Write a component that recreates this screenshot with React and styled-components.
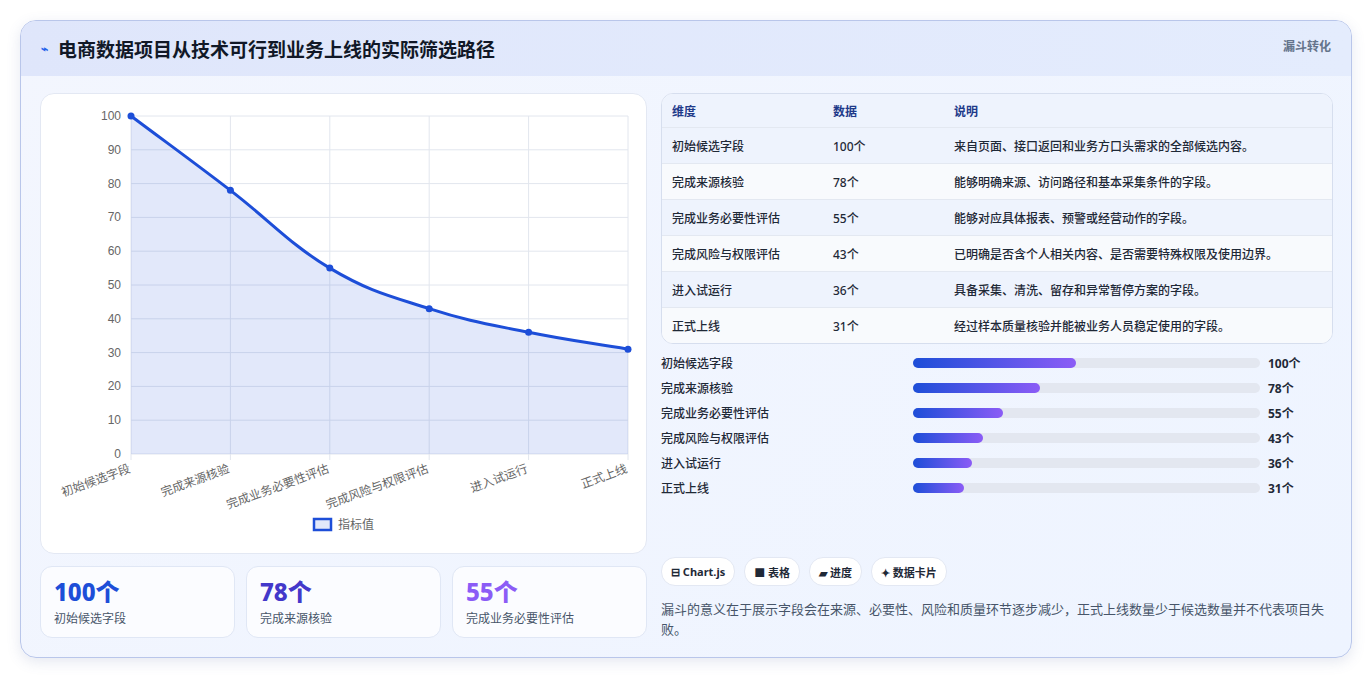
import React from 'react';
import styled, { createGlobalStyle } from 'styled-components';

const Global = createGlobalStyle`
  body { margin:0; background:#fff; font-family:"Noto Sans","Noto Sans CJK SC",sans-serif; }
`;

const Page = styled.div`
  padding:20px;
  height:678px;
  box-sizing:border-box;
`;

const Card = styled.div`
  height:638px;
  box-sizing:border-box;
  border:1px solid #b9c6ea;
  border-radius:16px;
  background:linear-gradient(135deg,#f3f6fe,#eef4ff);
  box-shadow:0 4px 14px rgba(80,100,160,0.15);
  overflow:hidden;
  display:flex;
  flex-direction:column;
`;

const Header = styled.div`
  height:55px;
  flex:none;
  display:flex;
  align-items:center;
  justify-content:space-between;
  padding:0 20px 0 20px;
  background:linear-gradient(90deg,#dfe6fb,#e4ecfd);
`;

const Title = styled.h1`
  margin:0;
  font-size:19px;
  font-weight:700;
  color:#111827;
  display:flex;
  align-items:center;
  gap:10px;
`;

const Tag = styled.span`
  font-size:12px;
  font-weight:700;
  color:#64748b;
  align-self:flex-start;
  margin-top:16px;
`;

const Body = styled.div`
  flex:1;
  display:grid;
  grid-template-columns:607px 672px;
  gap:14px;
  padding:17px 19px 18px 19px;
`;

const Col = styled.div`
  display:flex;
  flex-direction:column;
`;

const ChartPanel = styled.div`
  height:461px;
  background:#fff;
  border:1px solid #e3e8f3;
  border-radius:14px;
  box-sizing:border-box;
`;

const Kpis = styled.div`
  display:grid;
  grid-template-columns:repeat(3,1fr);
  gap:11px;
  margin-top:12px;
`;

const Kpi = styled.div`
  height:72px;
  box-sizing:border-box;
  background:#fbfcff;
  border:1px solid #e0e7f5;
  border-radius:12px;
  padding:10px 13px;
`;

const KpiValue = styled.div`
  font-size:24px;
  font-weight:800;
  line-height:30px;
  color:${p => p.color};
`;

const KpiLabel = styled.div`
  font-size:12px;
  color:#475569;
  margin-top:2px;
`;

const Table = styled.div`
  background:#fff;
  border:1px solid #d6deee;
  border-radius:12px;
  overflow:hidden;
`;

const Row = styled.div`
  display:grid;
  grid-template-columns:161px 121px 1fr;
  height:${p => (p.head ? 33 : 35)}px;
  align-items:center;
  padding-left:10px;
  font-size:12px;
  color:#1f2937;
  font-weight:${p => (p.head ? 700 : 500)};
  background:${p => (p.head ? '#eef3fd' : p.alt ? '#f8fafd' : '#eef3fd')};
  border-top:${p => (p.head ? 'none' : '1px solid #e3e8f1')};
  ${p => p.head && 'color:#1e3a8a;'}
`;

const Bars = styled.div`
  display:flex;
  flex-direction:column;
  gap:7px;
  margin-top:10px;
`;

const BarRow = styled.div`
  display:grid;
  grid-template-columns:252px 347px 1fr;
  gap:0 0;
  align-items:center;
  height:18px;
  font-size:12px;
  font-weight:500;
  color:#1f2937;
`;

const Track = styled.div`
  height:10px;
  border-radius:5px;
  background:#e3e7f0;
`;

const Fill = styled.div`
  height:100%;
  border-radius:5px;
  background:linear-gradient(90deg,#1d4ed8,#8b5cf6);
`;

const BarVal = styled.span`
  font-weight:700;
  padding-left:8px;
`;

const Chips = styled.div`
  display:flex;
  gap:9px;
  margin-top:auto;
`;

const Chip = styled.span`
  height:27px;
  padding:0 9px;
  display:flex;
  align-items:center;
  gap:4px;
  background:#fff;
  border:1px solid #e3e8f3;
  border-radius:14px;
  font-size:11px;
  font-weight:700;
  color:#1f2937;
`;

const Note = styled.p`
  margin:13px 0 0;
  font-size:13px;
  line-height:20px;
  color:#475569;
`;

const data = [
  ['初始候选字段', 100, '来自页面、接口返回和业务方口头需求的全部候选内容。'],
  ['完成来源核验', 78, '能够明确来源、访问路径和基本采集条件的字段。'],
  ['完成业务必要性评估', 55, '能够对应具体报表、预警或经营动作的字段。'],
  ['完成风险与权限评估', 43, '已明确是否含个人相关内容、是否需要特殊权限及使用边界。'],
  ['进入试运行', 36, '具备采集、清洗、留存和异常暂停方案的字段。'],
  ['正式上线', 31, '经过样本质量核验并能被业务人员稳定使用的字段。'],
];

const Chart = () => {
  const x0 = 90, x1 = 587, y0 = 22, y1 = 360;
  const xs = data.map((_, i) => x0 + (i * (x1 - x0)) / 5);
  const ys = data.map(d => y1 - (d[1] / 100) * (y1 - y0));
  let path = `M${xs[0]},${ys[0]}`;
  for (let i = 1; i < 6; i++) {
    const cx = (xs[i] - xs[i - 1]) * 0.4;
    const s0 = i > 1 ? (ys[i] - ys[i - 2]) / 2 : ys[1] - ys[0];
    const s1 = i < 5 ? (ys[i + 1] - ys[i - 1]) / 2 : ys[5] - ys[4];
    path += ` C${xs[i - 1] + cx},${ys[i - 1] + s0 * 0.4} ${xs[i] - cx},${ys[i] - s1 * 0.4} ${xs[i]},${ys[i]}`;
  }
  const ticks = [0, 10, 20, 30, 40, 50, 60, 70, 80, 90, 100];
  return (
    <svg width="605" height="459" style={{ display: 'block' }}>
      {ticks.map(t => {
        const y = y1 - (t / 100) * (y1 - y0);
        return (
          <g key={t}>
            <line x1={x0} x2={x1} y1={y} y2={y} stroke="#e2e6ee" />
            <text x={x0 - 10} y={y + 4} textAnchor="end" fontSize="12" fill="#666" fontFamily="Liberation Sans">{t}</text>
          </g>
        );
      })}
      {xs.map((x, i) => (
        <g key={i}>
          <line x1={x} x2={x} y1={y0} y2={y1 + 6} stroke="#e2e6ee" />
          <text transform={`translate(${x},${y1 + 18}) rotate(-20)`} textAnchor="end" fontSize="12" fill="#666" fontFamily="Noto Sans CJK SC">{data[i][0]}</text>
        </g>
      ))}
      <path d={`${path} L${x1},${y1} L${x0},${y1} Z`} fill="rgba(29,78,216,0.13)" />
      <path d={path} fill="none" stroke="#1d4ed8" strokeWidth="3" />
      {xs.map((x, i) => <circle key={i} cx={x} cy={ys[i]} r="3.5" fill="#1d4ed8" />)}
      <rect x="273" y="425" width="17" height="11" fill="rgba(29,78,216,0.13)" stroke="#1d4ed8" strokeWidth="2.5" />
      <text x="297" y="435" fontSize="12" fill="#666" fontFamily="Noto Sans CJK SC">指标值</text>
    </svg>
  );
};

export default function App() {
  return (
    <Page>
      <Global />
      <Card>
        <Header>
          <Title><span style={{ color: '#2563eb', fontSize: 12 }}>⌁</span>电商数据项目从技术可行到业务上线的实际筛选路径</Title>
          <Tag>漏斗转化</Tag>
        </Header>
        <Body>
          <Col>
            <ChartPanel><Chart /></ChartPanel>
            <Kpis>
              <Kpi><KpiValue color="#1d4ed8">100个</KpiValue><KpiLabel>初始候选字段</KpiLabel></Kpi>
              <Kpi><KpiValue color="#4338ca">78个</KpiValue><KpiLabel>完成来源核验</KpiLabel></Kpi>
              <Kpi><KpiValue color="#8b5cf6">55个</KpiValue><KpiLabel>完成业务必要性评估</KpiLabel></Kpi>
            </Kpis>
          </Col>
          <Col>
            <Table>
              <Row head><span>维度</span><span>数据</span><span>说明</span></Row>
              {data.map((d, i) => (
                <Row key={d[0]} alt={i % 2 === 1}><span>{d[0]}</span><span>{d[1]}个</span><span>{d[2]}</span></Row>
              ))}
            </Table>
            <Bars>
              {data.map(d => (
                <BarRow key={d[0]}>
                  <span>{d[0]}</span>
                  <Track><Fill style={{ width: `${d[1] * 0.47}%` }} /></Track>
                  <BarVal>{d[1]}个</BarVal>
                </BarRow>
              ))}
            </Bars>
            <Chips>
              <Chip>⊟ Chart.js</Chip>
              <Chip>■ 表格</Chip>
              <Chip>▰ 进度</Chip>
              <Chip>✦ 数据卡片</Chip>
            </Chips>
            <Note>漏斗的意义在于展示字段会在来源、必要性、风险和质量环节逐步减少，正式上线数量少于候选数量并不代表项目失败。</Note>
          </Col>
        </Body>
      </Card>
    </Page>
  );
}
